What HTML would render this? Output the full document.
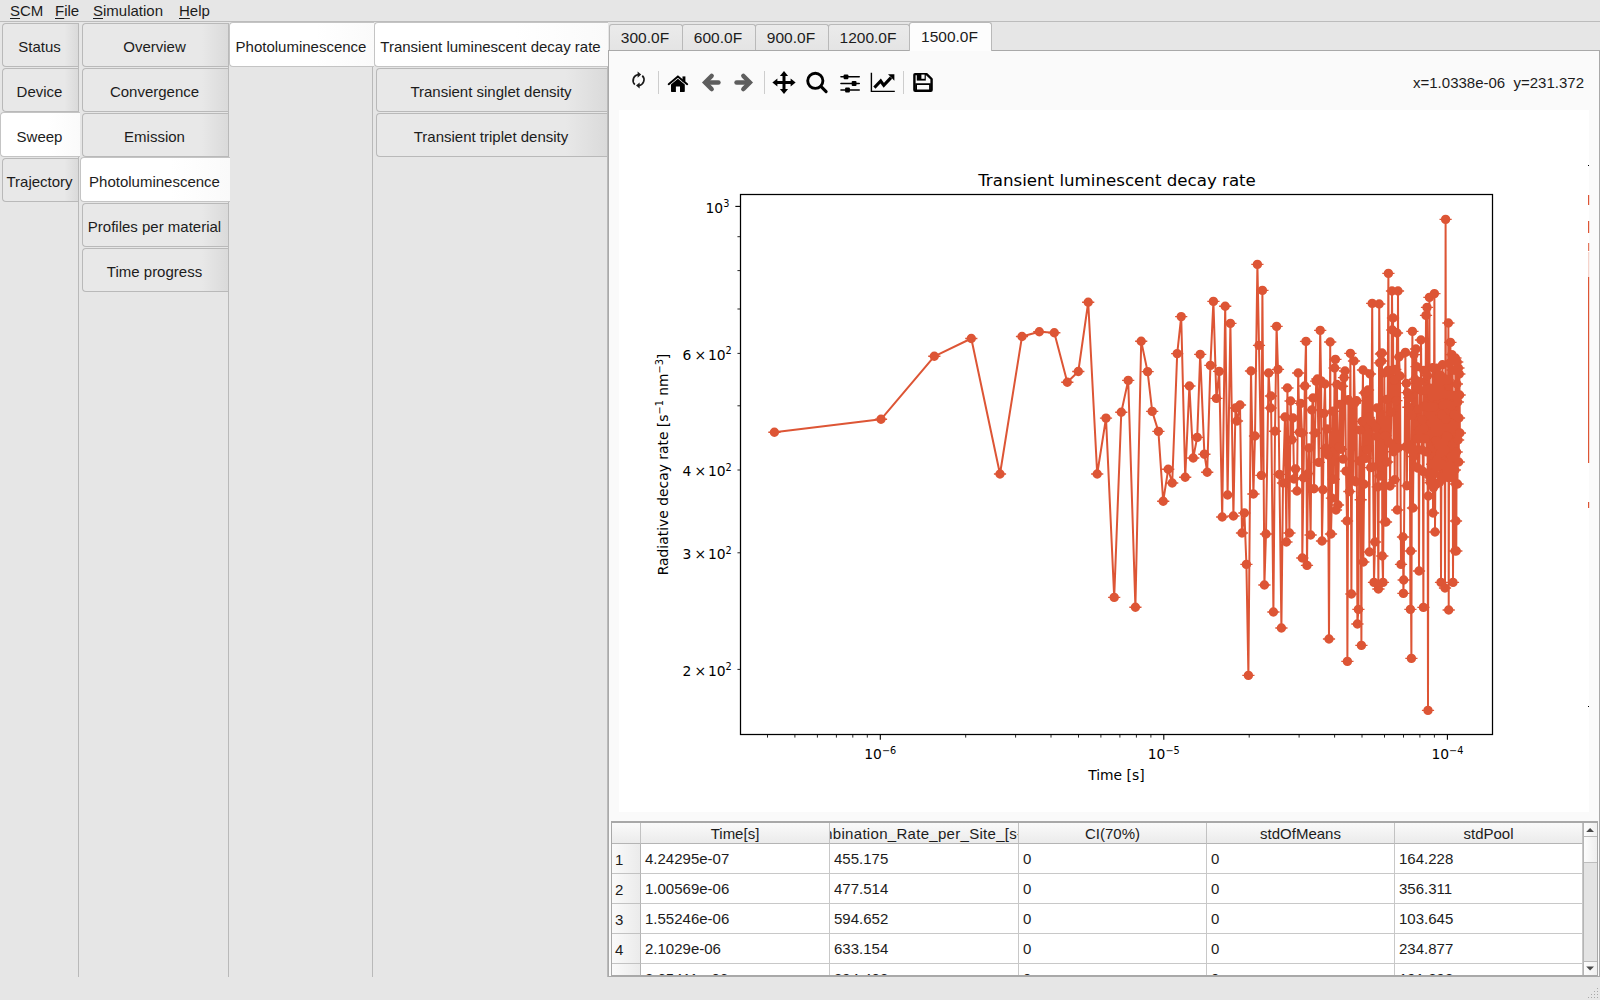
<!DOCTYPE html><html><head><meta charset="utf-8"><title>Sweep - Photoluminescence</title><style>
*{box-sizing:border-box}
html,body{margin:0;padding:0}
body{width:1600px;height:1000px;overflow:hidden;background:#e6e6e6;font-family:"Liberation Sans",sans-serif;font-size:15px;color:#1c1c1c;position:relative}
.abs{position:absolute}
.menubar{left:0;top:0;width:1600px;height:22px;border-bottom:1px solid #bcbcbc}
.menubar span{position:absolute;top:2px;line-height:18px}
.menubar u{text-decoration-thickness:1px;text-underline-offset:2px}
.vline{width:1px;background:#b9b9b9;top:23px;height:954px}
.tab{height:44px;line-height:44px;padding-top:1px;padding-right:2px;text-align:center;border:1px solid #b9b9b9;border-right:none;border-radius:4px 0 0 4px;background:linear-gradient(90deg,#e8e8e8 0%,#e8e8e8 82%,#dadada 100%);white-space:nowrap}
.tab.sel{height:45px;padding-top:2px;background:linear-gradient(90deg,#ffffff 0%,#ffffff 60%,#fafafa 100%);border-color:#c4c4c4;z-index:3;border-right:none}
.htab{top:24px;height:26px;line-height:25px;padding-right:2px;font-size:15.5px;text-align:center;border:1px solid #b9b9b9;border-bottom:none;border-radius:3px 3px 0 0;background:linear-gradient(180deg,#ebebeb,#e4e4e4)}
.htab.sel{top:22px;height:29px;line-height:27px;background:#fdfdfd;z-index:3}
.panel{left:608px;top:50px;width:992px;height:927px;background:#fafafa;border:1px solid #a9a9a9}
.canvas{left:619px;top:110px;width:970px;height:702px;background:#fff}
.sep{width:1px;height:24px;top:70px;background:#d0d0d0}
.coords{right:16px;top:74px;line-height:18px;white-space:pre}
.tbl{left:611px;top:821px;width:987px;height:155px;background:#fff;border:1px solid #a8a8a8;border-top:2px solid #a8a8a8;overflow:hidden}
.hdr{top:0;height:21px;line-height:21px;text-align:center;background:linear-gradient(180deg,#fafafa,#ebebeb);border-right:1px solid #c2c2c2;border-bottom:1px solid #b4b4b4;white-space:nowrap;overflow:hidden}
.rowh{left:0;width:29px;height:30px;line-height:31px;padding-left:3px;background:linear-gradient(90deg,#fafafa,#ebebeb);border-right:1px solid #b4b4b4;border-bottom:1px solid #c2c2c2}
.cell{height:30px;line-height:30px;padding-left:4px;border-right:1px solid #c8c8c8;border-bottom:1px solid #c8c8c8;white-space:nowrap;overflow:hidden}
.sb{left:1583px;top:823px;width:14px;height:152px;background:#e3e3e3;border-left:1px solid #b4b4b4}
.sbb{left:0;width:13px;height:14px;background:linear-gradient(90deg,#fdfdfd,#f0f0f0);border-bottom:1px solid #b9b9b9}
svg text{font-family:"DejaVu Sans",sans-serif}
</style></head><body>
<div class="abs menubar"><span style="left:10px"><u>S</u>CM</span><span style="left:55px"><u>F</u>ile</span><span style="left:93px"><u>S</u>imulation</span><span style="left:179px"><u>H</u>elp</span></div>
<div class="abs vline" style="left:78px"></div>
<div class="abs vline" style="left:228px"></div>
<div class="abs vline" style="left:372px"></div>
<div class="abs vline" style="left:607px"></div>
<div class="abs tab" style="left:2px;top:23px;width:76px">Status</div>
<div class="abs tab" style="left:2px;top:68px;width:76px">Device</div>
<div class="abs tab sel" style="left:0px;top:112px;width:80px">Sweep</div>
<div class="abs tab" style="left:2px;top:158px;width:76px">Trajectory</div>
<div class="abs tab" style="left:82px;top:23px;width:146px">Overview</div>
<div class="abs tab" style="left:82px;top:68px;width:146px">Convergence</div>
<div class="abs tab" style="left:82px;top:113px;width:146px">Emission</div>
<div class="abs tab sel" style="left:80px;top:157px;width:150px">Photoluminescence</div>
<div class="abs tab" style="left:82px;top:203px;width:146px">Profiles per material</div>
<div class="abs tab" style="left:82px;top:248px;width:146px">Time progress</div>
<div class="abs tab sel" style="left:229px;top:22px;width:145px">Photoluminescence</div>
<div class="abs tab sel" style="left:374px;top:22px;width:234px">Transient luminescent decay rate</div>
<div class="abs tab" style="left:376px;top:68px;width:231px">Transient singlet density</div>
<div class="abs tab" style="left:376px;top:113px;width:231px">Transient triplet density</div>
<div class="abs panel"></div>
<div class="abs htab" style="left:609px;width:74px">300.0F</div>
<div class="abs htab" style="left:682px;width:74px">600.0F</div>
<div class="abs htab" style="left:755px;width:74px">900.0F</div>
<div class="abs htab" style="left:828px;width:82px">1200.0F</div>
<div class="abs htab sel" style="left:909px;width:83px">1500.0F</div>
<svg class="abs" style="left:608px;top:60px" width="400" height="44" viewBox="608 60 400 44">
<rect x="658.0" y="71" width="1" height="23" fill="#cdcdcd"/>
<rect x="764.0" y="71" width="1" height="23" fill="#cdcdcd"/>
<rect x="903.0" y="71" width="1" height="23" fill="#cdcdcd"/>
<g fill="none" stroke="#1a1a1a" stroke-width="1.7"><path d="M634.8 84.6A5.9 5.9 0 0 1 638.6 74.6"/><path d="M642.3 75.6A5.9 5.9 0 0 1 638.6 85.6"/></g><path d="M637.6 71.6L641.2 74.6L637.6 77.7Z" fill="#1a1a1a"/><path d="M639.6 82.5L636 85.6L639.6 88.6Z" fill="#1a1a1a"/>
<g fill="#000"><path d="M668.7 84.2L677.9 76.5L687.2 84.2" fill="none" stroke="#000" stroke-width="2" stroke-linecap="round" stroke-linejoin="miter"/><path d="M671 84.4L677.9 78.7L684.8 84.4V91.3Q684.8 92 684.1 92H680V86.4H675.9V92H671.7Q671 92 671 91.3Z"/><rect x="682.5" y="76.4" width="2.9" height="5.2"/></g>
<g fill="none" stroke="#5e5e5e" stroke-width="4.6" stroke-linecap="round" stroke-linejoin="miter"><path d="M711.6 76L705.2 82.5L711.6 89"/><path d="M706 82.5H718.4"/><path d="M743.4 76L749.8 82.5L743.4 89"/><path d="M749 82.5H736.6"/></g>
<g fill="#000"><rect x="782.5" y="74" width="3" height="17"/><rect x="775.5" y="81" width="17" height="3"/><path d="M784 70.9L788.1 75.9H779.9Z"/><path d="M784 94.1L788.1 89.1H779.9Z"/><path d="M772.4 82.5L777.4 78.4V86.6Z"/><path d="M795.6 82.5L790.6 78.4V86.6Z"/></g>
<circle cx="815.3" cy="80.8" r="7.6" fill="none" stroke="#000" stroke-width="2.9"/><path d="M820.9 86.4L826.1 91.6" stroke="#000" stroke-width="3.1" stroke-linecap="round"/>
<g fill="#000"><rect x="840.2" y="76" width="19.8" height="1.6" rx=".8"/><rect x="840.2" y="82.7" width="19.8" height="1.6" rx=".8"/><rect x="840.2" y="89.2" width="19.8" height="1.6" rx=".8"/><rect x="843.6" y="74.4" width="4.8" height="4.8" rx="1"/><rect x="851.7" y="81.1" width="4.8" height="4.8" rx="1"/><rect x="845.1" y="87.6" width="4.8" height="4.8" rx="1"/></g>
<path d="M871.4 72.7V91.4H894.8" fill="none" stroke="#000" stroke-width="1.4"/><path d="M874.4 87.6L880.7 81L883.8 85.4L891 77.6" fill="none" stroke="#000" stroke-width="3.1" stroke-linejoin="miter"/><path d="M888 74.3H894.4V80.8Z" fill="#000"/>
<path d="M915 74.1H926.6L931.6 79V90Q931.6 90.7 930.9 90.7H915.2Q914.4 90.7 914.4 90V74.8Q914.4 74.1 915 74.1Z" fill="#fafafa" stroke="#000" stroke-width="2.4" stroke-linejoin="round"/><rect x="916.8" y="73.5" width="9" height="7.1" fill="#000"/><rect x="921.4" y="74.6" width="3.2" height="4.2" fill="#fafafa"/><path d="M916.1 91V84.2H930V91" fill="none" stroke="#000" stroke-width="1.8"/>
</svg>
<div class="abs coords">x=1.0338e-06  y=231.372</div>
<div class="abs canvas"></div>
<svg class="abs" style="left:0;top:0" width="1600" height="1000" viewBox="0 0 1600 1000">
<defs><clipPath id="axclip"><rect x="740.25" y="194.2" width="751.75" height="540.5999999999999"/></clipPath></defs>
<g clip-path="url(#axclip)" stroke="#dd5535" fill="#dd5535">
<polyline fill="none" stroke-width="2" stroke-linejoin="round" points="774.4,432.3 881,419.3 934.3,356.3 971.3,338.5 1000,474 1022,336.5 1039.3,331.8 1054.3,332.8 1067.3,382.3 1078.3,371.5 1088.2,302.3 1097.2,474 1106,418.1 1114.2,597.4 1121.3,412.2 1128.2,380.4 1135.4,607.2 1141.2,341.2 1147.6,371.6 1152.2,411.4 1158.4,431.4 1163.2,501.2 1168.2,469.3 1172.2,483 1177.2,353.6 1181.2,316.6 1185.2,477.2 1189.4,386 1193.2,458 1197.2,437.4 1200.2,354.4 1204.4,454.2 1207.2,472.2 1210.4,365.4 1213.4,301.4 1216.4,398.4 1219.2,371.4 1222.2,517 1225.2,306.2 1227.6,495 1230.4,323.4 1233.4,516 1235.5,408 1237,421 1240,405 1242,533 1244.4,513 1246.4,564.4 1248.4,675.4 1251,371 1253.4,494 1255,436 1257.4,264.4 1259,345.4 1261.4,475.4 1262.4,290.4 1264.4,585 1266,534 1268.6,373 1270.6,408 1271,396 1273.4,612 1275,431.2 1276.6,326.4 1278,369.4 1279.4,474.4 1281.4,628 1283,483 1285,417 1286.4,542 1287.4,388 1289.4,533 1290.6,401 1291.8,439.8 1293,418 1294,479 1295.5,468.9 1297,491 1298.2,373 1299.5,432.3 1300.7,403.4 1302,433 1302.3,558 1303.5,477.7 1304.8,386 1306,341.4 1307,565.4 1308,473.6 1309,448 1310.6,535 1311.8,410 1313,398 1314,488.8 1315,433 1316.2,381.1 1317.4,379 1318.8,462.4 1320.2,330.4 1321.1,380.9 1322,541 1323,489.7 1324,413.4 1325,384 1326,448.3 1327,429 1328,455 1329,639 1330.2,342 1331,534 1331.9,498.1 1332.8,411.3 1333.7,479.2 1334.6,368 1335.4,359.4 1336,510 1337,384.5 1338,505 1339,446.8 1340,404.5 1341,449.2 1342,386.3 1343,459.1 1344,377.6 1345,371 1346,471.1 1347,521 1347.4,661.4 1348.4,399.8 1349.4,491.5 1350.4,353.4 1351.4,594 1352.3,404 1353.1,480.6 1354,361 1354.8,403 1355.7,481.8 1356.6,400.7 1357.4,624 1358.4,609.4 1359.2,461 1359.9,429.9 1360.7,499.8 1361.4,645.4 1362.2,421.4 1363,370 1363.3,562 1364.1,484.2 1364.9,393 1365.7,458.4 1366.4,391.6 1367.2,449.8 1368,390 1368.7,417.4 1369.4,552 1370,374 1370.7,467.6 1371.5,421.7 1372.2,303.4 1373.1,466.9 1374,582.4 1375,542 1375.7,427.7 1376.4,436.3 1377,408 1377.7,486.9 1378.4,589 1379.2,304 1379.8,362.9 1380.4,476 1381,354 1381.5,361 1382,353 1382.3,556 1383,582.4 1383.7,485.9 1384.3,372.9 1385,522 1385.5,435.6 1386,522 1386.6,399.4 1387.2,462 1387.8,370.5 1388.4,273.4 1388.9,442 1389.5,370.4 1390,486 1390.7,443.6 1391.3,412.3 1392,291 1392.3,330 1393,318 1393.6,451.7 1394.1,380.3 1394.7,479.7 1395.3,369.5 1395.9,448.6 1396.4,400.6 1397,333 1397.3,510 1398,291 1398.5,447.6 1399,357 1400,376 1401,564.4 1403,537 1403.4,593.4 1403.7,580 1405.4,352.4 1405.9,446.7 1406.4,383.4 1406.9,485.7 1407.4,392.6 1407.9,445.9 1408.4,407.3 1408.9,449 1409.4,397.7 1409.9,447.3 1410.4,609.4 1410.7,551 1411.4,658.4 1411.9,415.5 1412.4,331.4 1413,508 1413.5,456.5 1414,354.6 1414.5,449.6 1415,379.2 1415.5,467 1416,349 1416.5,366.6 1417,438.6 1417.5,387.7 1418,468.1 1418.5,409.3 1419,571 1419.5,430.2 1420,381.8 1420.5,438.3 1421,340 1421.5,390.7 1422,450 1422.4,419.8 1422.9,471.4 1423.4,607.4 1423.8,370.5 1424.3,428.5 1424.7,405.8 1425.1,438.7 1425.6,390 1426,315.4 1426.5,451.9 1427,307.4 1427.5,375.7 1428,710.4 1428.3,496 1428.7,473.5 1429,407.5 1429.4,297.4 1429.8,477 1430.2,388.1 1430.6,482.7 1431,390.6 1431.4,480.9 1431.8,396.8 1432.2,464.3 1432.6,367.8 1433,513 1433.5,487.6 1433.9,406.7 1434.4,293.6 1435,532 1435.4,473 1435.8,386.8 1436.2,440.6 1436.6,368.1 1437,459.8 1437.4,395.9 1437.8,466.6 1438.2,383.3 1438.6,445.4 1439,375.8 1439.4,482.4 1439.8,388.3 1440.2,453.5 1440.6,375.3 1441,582.4 1441.4,477.1 1441.7,415 1442.1,464.3 1442.5,364.8 1442.8,479 1443.2,405.4 1443.5,451.4 1443.9,380.4 1444.3,442.4 1444.6,394.4 1445,588 1445.3,450 1445.6,219.4 1445.9,419.3 1446.3,436.2 1446.7,403.6 1447,470.4 1447.3,379.5 1447.7,436.7 1448.1,380.1 1448.4,323 1448.7,610 1449,477.7 1449.4,363.4 1449.7,465.6 1450.1,395.2 1450.4,342.4 1450.8,477.6 1451.1,405.6 1451.5,457.1 1451.9,354.6 1452.3,472 1452.6,370 1453,582.4 1453.4,470.7 1453.7,395.4 1454.1,456 1454.4,414.8 1454.8,470 1455.1,551 1455.4,358 1455.7,484 1456,521 1456.3,551 1456.6,452 1456.9,384 1457.2,362 1457.5,484 1457.8,402 1458.1,440 1458.4,368 1458.7,462 1459,418 1459.3,374 1459.6,395 1459.9,433"/>
<path d="M768.3 432.3h12.2M874.9 419.3h12.2M928.2 356.3h12.2M965.2 338.5h12.2M993.9 474h12.2M1015.9 336.5h12.2M1033.2 331.8h12.2M1048.2 332.8h12.2M1061.2 382.3h12.2M1072.2 371.5h12.2M1082.1 302.3h12.2M1091.1 474h12.2M1099.9 418.1h12.2M1108.1 597.4h12.2M1115.2 412.2h12.2M1122.1 380.4h12.2M1129.3 607.2h12.2M1135.1 341.2h12.2M1141.5 371.6h12.2M1146.1 411.4h12.2M1152.3 431.4h12.2M1157.1 501.2h12.2M1162.1 469.3h12.2M1166.1 483h12.2M1171.1 353.6h12.2M1175.1 316.6h12.2M1179.1 477.2h12.2M1183.3 386h12.2M1187.1 458h12.2M1191.1 437.4h12.2M1194.1 354.4h12.2M1198.3 454.2h12.2M1201.1 472.2h12.2M1204.3 365.4h12.2M1207.3 301.4h12.2M1210.3 398.4h12.2M1213.1 371.4h12.2M1216.1 517h12.2M1219.1 306.2h12.2M1221.5 495h12.2M1224.3 323.4h12.2M1227.3 516h12.2M1229.4 408h12.2M1230.9 421h12.2M1233.9 405h12.2M1235.9 533h12.2M1238.3 513h12.2M1240.3 564.4h12.2M1242.3 675.4h12.2M1244.9 371h12.2M1247.3 494h12.2M1248.9 436h12.2M1251.3 264.4h12.2M1252.9 345.4h12.2M1255.3 475.4h12.2M1256.3 290.4h12.2M1258.3 585h12.2M1259.9 534h12.2M1262.5 373h12.2M1264.5 408h12.2M1264.9 396h12.2M1267.3 612h12.2M1268.9 431.2h12.2M1270.5 326.4h12.2M1271.9 369.4h12.2M1273.3 474.4h12.2M1275.3 628h12.2M1276.9 483h12.2M1278.9 417h12.2M1280.3 542h12.2M1281.3 388h12.2M1283.3 533h12.2M1284.5 401h12.2M1285.7 439.8h12.2M1286.9 418h12.2M1287.9 479h12.2M1289.4 468.9h12.2M1290.9 491h12.2M1292.1 373h12.2M1293.4 432.3h12.2M1294.6 403.4h12.2M1295.9 433h12.2M1296.2 558h12.2M1297.4 477.7h12.2M1298.7 386h12.2M1299.9 341.4h12.2M1300.9 565.4h12.2M1301.9 473.6h12.2M1302.9 448h12.2M1304.5 535h12.2M1305.7 410h12.2M1306.9 398h12.2M1307.9 488.8h12.2M1308.9 433h12.2M1310.1 381.1h12.2M1311.3 379h12.2M1312.7 462.4h12.2M1314.1 330.4h12.2M1315 380.9h12.2M1315.9 541h12.2M1316.9 489.7h12.2M1317.9 413.4h12.2M1318.9 384h12.2M1319.9 448.3h12.2M1320.9 429h12.2M1321.9 455h12.2M1322.9 639h12.2M1324.1 342h12.2M1324.9 534h12.2M1325.8 498.1h12.2M1326.7 411.3h12.2M1327.6 479.2h12.2M1328.5 368h12.2M1329.3 359.4h12.2M1329.9 510h12.2M1330.9 384.5h12.2M1331.9 505h12.2M1332.9 446.8h12.2M1333.9 404.5h12.2M1334.9 449.2h12.2M1335.9 386.3h12.2M1336.9 459.1h12.2M1337.9 377.6h12.2M1338.9 371h12.2M1339.9 471.1h12.2M1340.9 521h12.2M1341.3 661.4h12.2M1342.3 399.8h12.2M1343.3 491.5h12.2M1344.3 353.4h12.2M1345.3 594h12.2M1346.2 404h12.2M1347 480.6h12.2M1347.9 361h12.2M1348.8 403h12.2M1349.6 481.8h12.2M1350.5 400.7h12.2M1351.3 624h12.2M1352.3 609.4h12.2M1353.1 461h12.2M1353.8 429.9h12.2M1354.6 499.8h12.2M1355.3 645.4h12.2M1356.1 421.4h12.2M1356.9 370h12.2M1357.2 562h12.2M1358 484.2h12.2M1358.8 393h12.2M1359.6 458.4h12.2M1360.3 391.6h12.2M1361.1 449.8h12.2M1361.9 390h12.2M1362.6 417.4h12.2M1363.3 552h12.2M1363.9 374h12.2M1364.6 467.6h12.2M1365.4 421.7h12.2M1366.1 303.4h12.2M1367 466.9h12.2M1367.9 582.4h12.2M1368.9 542h12.2M1369.6 427.7h12.2M1370.3 436.3h12.2M1370.9 408h12.2M1371.6 486.9h12.2M1372.3 589h12.2M1373.1 304h12.2M1373.7 362.9h12.2M1374.3 476h12.2M1374.9 354h12.2M1375.4 361h12.2M1375.9 353h12.2M1376.2 556h12.2M1376.9 582.4h12.2M1377.6 485.9h12.2M1378.2 372.9h12.2M1378.9 522h12.2M1379.4 435.6h12.2M1379.9 522h12.2M1380.5 399.4h12.2M1381.1 462h12.2M1381.7 370.5h12.2M1382.3 273.4h12.2M1382.8 442h12.2M1383.4 370.4h12.2M1383.9 486h12.2M1384.6 443.6h12.2M1385.2 412.3h12.2M1385.9 291h12.2M1386.2 330h12.2M1386.9 318h12.2M1387.5 451.7h12.2M1388 380.3h12.2M1388.6 479.7h12.2M1389.2 369.5h12.2M1389.8 448.6h12.2M1390.3 400.6h12.2M1390.9 333h12.2M1391.2 510h12.2M1391.9 291h12.2M1392.4 447.6h12.2M1392.9 357h12.2M1393.9 376h12.2M1394.9 564.4h12.2M1396.9 537h12.2M1397.3 593.4h12.2M1397.6 580h12.2M1399.3 352.4h12.2M1399.8 446.7h12.2M1400.3 383.4h12.2M1400.8 485.7h12.2M1401.3 392.6h12.2M1401.8 445.9h12.2M1402.3 407.3h12.2M1402.8 449h12.2M1403.3 397.7h12.2M1403.8 447.3h12.2M1404.3 609.4h12.2M1404.6 551h12.2M1405.3 658.4h12.2M1405.8 415.5h12.2M1406.3 331.4h12.2M1406.9 508h12.2M1407.4 456.5h12.2M1407.9 354.6h12.2M1408.4 449.6h12.2M1408.9 379.2h12.2M1409.4 467h12.2M1409.9 349h12.2M1410.4 366.6h12.2M1410.9 438.6h12.2M1411.4 387.7h12.2M1411.9 468.1h12.2M1412.4 409.3h12.2M1412.9 571h12.2M1413.4 430.2h12.2M1413.9 381.8h12.2M1414.4 438.3h12.2M1414.9 340h12.2M1415.4 390.7h12.2M1415.9 450h12.2M1416.3 419.8h12.2M1416.8 471.4h12.2M1417.3 607.4h12.2M1417.7 370.5h12.2M1418.2 428.5h12.2M1418.6 405.8h12.2M1419 438.7h12.2M1419.5 390h12.2M1419.9 315.4h12.2M1420.4 451.9h12.2M1420.9 307.4h12.2M1421.4 375.7h12.2M1421.9 710.4h12.2M1422.2 496h12.2M1422.6 473.5h12.2M1422.9 407.5h12.2M1423.3 297.4h12.2M1423.7 477h12.2M1424.1 388.1h12.2M1424.5 482.7h12.2M1424.9 390.6h12.2M1425.3 480.9h12.2M1425.7 396.8h12.2M1426.1 464.3h12.2M1426.5 367.8h12.2M1426.9 513h12.2M1427.4 487.6h12.2M1427.8 406.7h12.2M1428.3 293.6h12.2M1428.9 532h12.2M1429.3 473h12.2M1429.7 386.8h12.2M1430.1 440.6h12.2M1430.5 368.1h12.2M1430.9 459.8h12.2M1431.3 395.9h12.2M1431.7 466.6h12.2M1432.1 383.3h12.2M1432.5 445.4h12.2M1432.9 375.8h12.2M1433.3 482.4h12.2M1433.7 388.3h12.2M1434.1 453.5h12.2M1434.5 375.3h12.2M1434.9 582.4h12.2M1435.3 477.1h12.2M1435.6 415h12.2M1436 464.3h12.2M1436.4 364.8h12.2M1436.7 479h12.2M1437.1 405.4h12.2M1437.4 451.4h12.2M1437.8 380.4h12.2M1438.2 442.4h12.2M1438.5 394.4h12.2M1438.9 588h12.2M1439.2 450h12.2M1439.5 219.4h12.2M1439.8 419.3h12.2M1440.2 436.2h12.2M1440.6 403.6h12.2M1440.9 470.4h12.2M1441.2 379.5h12.2M1441.6 436.7h12.2M1442 380.1h12.2M1442.3 323h12.2M1442.6 610h12.2M1442.9 477.7h12.2M1443.3 363.4h12.2M1443.6 465.6h12.2M1444 395.2h12.2M1444.3 342.4h12.2M1444.7 477.6h12.2M1445 405.6h12.2M1445.4 457.1h12.2M1445.8 354.6h12.2M1446.2 472h12.2M1446.5 370h12.2M1446.9 582.4h12.2M1447.3 470.7h12.2M1447.6 395.4h12.2M1448 456h12.2M1448.3 414.8h12.2M1448.7 470h12.2M1449 551h12.2M1449.3 358h12.2M1449.6 484h12.2M1449.9 521h12.2M1450.2 551h12.2M1450.5 452h12.2M1450.8 384h12.2M1451.1 362h12.2M1451.4 484h12.2M1451.7 402h12.2M1452 440h12.2M1452.3 368h12.2M1452.6 462h12.2M1452.9 418h12.2M1453.2 374h12.2M1453.5 395h12.2M1453.8 433h12.2" stroke-width="1.4" fill="none"/>
<path d="M769.7 432.3a4.7 4.7 0 1 0 9.4 0a4.7 4.7 0 1 0 -9.4 0zM876.3 419.3a4.7 4.7 0 1 0 9.4 0a4.7 4.7 0 1 0 -9.4 0zM929.6 356.3a4.7 4.7 0 1 0 9.4 0a4.7 4.7 0 1 0 -9.4 0zM966.6 338.5a4.7 4.7 0 1 0 9.4 0a4.7 4.7 0 1 0 -9.4 0zM995.3 474a4.7 4.7 0 1 0 9.4 0a4.7 4.7 0 1 0 -9.4 0zM1017.3 336.5a4.7 4.7 0 1 0 9.4 0a4.7 4.7 0 1 0 -9.4 0zM1034.6 331.8a4.7 4.7 0 1 0 9.4 0a4.7 4.7 0 1 0 -9.4 0zM1049.6 332.8a4.7 4.7 0 1 0 9.4 0a4.7 4.7 0 1 0 -9.4 0zM1062.6 382.3a4.7 4.7 0 1 0 9.4 0a4.7 4.7 0 1 0 -9.4 0zM1073.6 371.5a4.7 4.7 0 1 0 9.4 0a4.7 4.7 0 1 0 -9.4 0zM1083.5 302.3a4.7 4.7 0 1 0 9.4 0a4.7 4.7 0 1 0 -9.4 0zM1092.5 474a4.7 4.7 0 1 0 9.4 0a4.7 4.7 0 1 0 -9.4 0zM1101.3 418.1a4.7 4.7 0 1 0 9.4 0a4.7 4.7 0 1 0 -9.4 0zM1109.5 597.4a4.7 4.7 0 1 0 9.4 0a4.7 4.7 0 1 0 -9.4 0zM1116.6 412.2a4.7 4.7 0 1 0 9.4 0a4.7 4.7 0 1 0 -9.4 0zM1123.5 380.4a4.7 4.7 0 1 0 9.4 0a4.7 4.7 0 1 0 -9.4 0zM1130.7 607.2a4.7 4.7 0 1 0 9.4 0a4.7 4.7 0 1 0 -9.4 0zM1136.5 341.2a4.7 4.7 0 1 0 9.4 0a4.7 4.7 0 1 0 -9.4 0zM1142.9 371.6a4.7 4.7 0 1 0 9.4 0a4.7 4.7 0 1 0 -9.4 0zM1147.5 411.4a4.7 4.7 0 1 0 9.4 0a4.7 4.7 0 1 0 -9.4 0zM1153.7 431.4a4.7 4.7 0 1 0 9.4 0a4.7 4.7 0 1 0 -9.4 0zM1158.5 501.2a4.7 4.7 0 1 0 9.4 0a4.7 4.7 0 1 0 -9.4 0zM1163.5 469.3a4.7 4.7 0 1 0 9.4 0a4.7 4.7 0 1 0 -9.4 0zM1167.5 483a4.7 4.7 0 1 0 9.4 0a4.7 4.7 0 1 0 -9.4 0zM1172.5 353.6a4.7 4.7 0 1 0 9.4 0a4.7 4.7 0 1 0 -9.4 0zM1176.5 316.6a4.7 4.7 0 1 0 9.4 0a4.7 4.7 0 1 0 -9.4 0zM1180.5 477.2a4.7 4.7 0 1 0 9.4 0a4.7 4.7 0 1 0 -9.4 0zM1184.7 386a4.7 4.7 0 1 0 9.4 0a4.7 4.7 0 1 0 -9.4 0zM1188.5 458a4.7 4.7 0 1 0 9.4 0a4.7 4.7 0 1 0 -9.4 0zM1192.5 437.4a4.7 4.7 0 1 0 9.4 0a4.7 4.7 0 1 0 -9.4 0zM1195.5 354.4a4.7 4.7 0 1 0 9.4 0a4.7 4.7 0 1 0 -9.4 0zM1199.7 454.2a4.7 4.7 0 1 0 9.4 0a4.7 4.7 0 1 0 -9.4 0zM1202.5 472.2a4.7 4.7 0 1 0 9.4 0a4.7 4.7 0 1 0 -9.4 0zM1205.7 365.4a4.7 4.7 0 1 0 9.4 0a4.7 4.7 0 1 0 -9.4 0zM1208.7 301.4a4.7 4.7 0 1 0 9.4 0a4.7 4.7 0 1 0 -9.4 0zM1211.7 398.4a4.7 4.7 0 1 0 9.4 0a4.7 4.7 0 1 0 -9.4 0zM1214.5 371.4a4.7 4.7 0 1 0 9.4 0a4.7 4.7 0 1 0 -9.4 0zM1217.5 517a4.7 4.7 0 1 0 9.4 0a4.7 4.7 0 1 0 -9.4 0zM1220.5 306.2a4.7 4.7 0 1 0 9.4 0a4.7 4.7 0 1 0 -9.4 0zM1222.9 495a4.7 4.7 0 1 0 9.4 0a4.7 4.7 0 1 0 -9.4 0zM1225.7 323.4a4.7 4.7 0 1 0 9.4 0a4.7 4.7 0 1 0 -9.4 0zM1228.7 516a4.7 4.7 0 1 0 9.4 0a4.7 4.7 0 1 0 -9.4 0zM1230.8 408a4.7 4.7 0 1 0 9.4 0a4.7 4.7 0 1 0 -9.4 0zM1232.3 421a4.7 4.7 0 1 0 9.4 0a4.7 4.7 0 1 0 -9.4 0zM1235.3 405a4.7 4.7 0 1 0 9.4 0a4.7 4.7 0 1 0 -9.4 0zM1237.3 533a4.7 4.7 0 1 0 9.4 0a4.7 4.7 0 1 0 -9.4 0zM1239.7 513a4.7 4.7 0 1 0 9.4 0a4.7 4.7 0 1 0 -9.4 0zM1241.7 564.4a4.7 4.7 0 1 0 9.4 0a4.7 4.7 0 1 0 -9.4 0zM1243.7 675.4a4.7 4.7 0 1 0 9.4 0a4.7 4.7 0 1 0 -9.4 0zM1246.3 371a4.7 4.7 0 1 0 9.4 0a4.7 4.7 0 1 0 -9.4 0zM1248.7 494a4.7 4.7 0 1 0 9.4 0a4.7 4.7 0 1 0 -9.4 0zM1250.3 436a4.7 4.7 0 1 0 9.4 0a4.7 4.7 0 1 0 -9.4 0zM1252.7 264.4a4.7 4.7 0 1 0 9.4 0a4.7 4.7 0 1 0 -9.4 0zM1254.3 345.4a4.7 4.7 0 1 0 9.4 0a4.7 4.7 0 1 0 -9.4 0zM1256.7 475.4a4.7 4.7 0 1 0 9.4 0a4.7 4.7 0 1 0 -9.4 0zM1257.7 290.4a4.7 4.7 0 1 0 9.4 0a4.7 4.7 0 1 0 -9.4 0zM1259.7 585a4.7 4.7 0 1 0 9.4 0a4.7 4.7 0 1 0 -9.4 0zM1261.3 534a4.7 4.7 0 1 0 9.4 0a4.7 4.7 0 1 0 -9.4 0zM1263.9 373a4.7 4.7 0 1 0 9.4 0a4.7 4.7 0 1 0 -9.4 0zM1265.9 408a4.7 4.7 0 1 0 9.4 0a4.7 4.7 0 1 0 -9.4 0zM1266.3 396a4.7 4.7 0 1 0 9.4 0a4.7 4.7 0 1 0 -9.4 0zM1268.7 612a4.7 4.7 0 1 0 9.4 0a4.7 4.7 0 1 0 -9.4 0zM1270.3 431.2a4.7 4.7 0 1 0 9.4 0a4.7 4.7 0 1 0 -9.4 0zM1271.9 326.4a4.7 4.7 0 1 0 9.4 0a4.7 4.7 0 1 0 -9.4 0zM1273.3 369.4a4.7 4.7 0 1 0 9.4 0a4.7 4.7 0 1 0 -9.4 0zM1274.7 474.4a4.7 4.7 0 1 0 9.4 0a4.7 4.7 0 1 0 -9.4 0zM1276.7 628a4.7 4.7 0 1 0 9.4 0a4.7 4.7 0 1 0 -9.4 0zM1278.3 483a4.7 4.7 0 1 0 9.4 0a4.7 4.7 0 1 0 -9.4 0zM1280.3 417a4.7 4.7 0 1 0 9.4 0a4.7 4.7 0 1 0 -9.4 0zM1281.7 542a4.7 4.7 0 1 0 9.4 0a4.7 4.7 0 1 0 -9.4 0zM1282.7 388a4.7 4.7 0 1 0 9.4 0a4.7 4.7 0 1 0 -9.4 0zM1284.7 533a4.7 4.7 0 1 0 9.4 0a4.7 4.7 0 1 0 -9.4 0zM1285.9 401a4.7 4.7 0 1 0 9.4 0a4.7 4.7 0 1 0 -9.4 0zM1287.1 439.8a4.7 4.7 0 1 0 9.4 0a4.7 4.7 0 1 0 -9.4 0zM1288.3 418a4.7 4.7 0 1 0 9.4 0a4.7 4.7 0 1 0 -9.4 0zM1289.3 479a4.7 4.7 0 1 0 9.4 0a4.7 4.7 0 1 0 -9.4 0zM1290.8 468.9a4.7 4.7 0 1 0 9.4 0a4.7 4.7 0 1 0 -9.4 0zM1292.3 491a4.7 4.7 0 1 0 9.4 0a4.7 4.7 0 1 0 -9.4 0zM1293.5 373a4.7 4.7 0 1 0 9.4 0a4.7 4.7 0 1 0 -9.4 0zM1294.8 432.3a4.7 4.7 0 1 0 9.4 0a4.7 4.7 0 1 0 -9.4 0zM1296 403.4a4.7 4.7 0 1 0 9.4 0a4.7 4.7 0 1 0 -9.4 0zM1297.3 433a4.7 4.7 0 1 0 9.4 0a4.7 4.7 0 1 0 -9.4 0zM1297.6 558a4.7 4.7 0 1 0 9.4 0a4.7 4.7 0 1 0 -9.4 0zM1298.8 477.7a4.7 4.7 0 1 0 9.4 0a4.7 4.7 0 1 0 -9.4 0zM1300.1 386a4.7 4.7 0 1 0 9.4 0a4.7 4.7 0 1 0 -9.4 0zM1301.3 341.4a4.7 4.7 0 1 0 9.4 0a4.7 4.7 0 1 0 -9.4 0zM1302.3 565.4a4.7 4.7 0 1 0 9.4 0a4.7 4.7 0 1 0 -9.4 0zM1303.3 473.6a4.7 4.7 0 1 0 9.4 0a4.7 4.7 0 1 0 -9.4 0zM1304.3 448a4.7 4.7 0 1 0 9.4 0a4.7 4.7 0 1 0 -9.4 0zM1305.9 535a4.7 4.7 0 1 0 9.4 0a4.7 4.7 0 1 0 -9.4 0zM1307.1 410a4.7 4.7 0 1 0 9.4 0a4.7 4.7 0 1 0 -9.4 0zM1308.3 398a4.7 4.7 0 1 0 9.4 0a4.7 4.7 0 1 0 -9.4 0zM1309.3 488.8a4.7 4.7 0 1 0 9.4 0a4.7 4.7 0 1 0 -9.4 0zM1310.3 433a4.7 4.7 0 1 0 9.4 0a4.7 4.7 0 1 0 -9.4 0zM1311.5 381.1a4.7 4.7 0 1 0 9.4 0a4.7 4.7 0 1 0 -9.4 0zM1312.7 379a4.7 4.7 0 1 0 9.4 0a4.7 4.7 0 1 0 -9.4 0zM1314.1 462.4a4.7 4.7 0 1 0 9.4 0a4.7 4.7 0 1 0 -9.4 0zM1315.5 330.4a4.7 4.7 0 1 0 9.4 0a4.7 4.7 0 1 0 -9.4 0zM1316.4 380.9a4.7 4.7 0 1 0 9.4 0a4.7 4.7 0 1 0 -9.4 0zM1317.3 541a4.7 4.7 0 1 0 9.4 0a4.7 4.7 0 1 0 -9.4 0zM1318.3 489.7a4.7 4.7 0 1 0 9.4 0a4.7 4.7 0 1 0 -9.4 0zM1319.3 413.4a4.7 4.7 0 1 0 9.4 0a4.7 4.7 0 1 0 -9.4 0zM1320.3 384a4.7 4.7 0 1 0 9.4 0a4.7 4.7 0 1 0 -9.4 0zM1321.3 448.3a4.7 4.7 0 1 0 9.4 0a4.7 4.7 0 1 0 -9.4 0zM1322.3 429a4.7 4.7 0 1 0 9.4 0a4.7 4.7 0 1 0 -9.4 0zM1323.3 455a4.7 4.7 0 1 0 9.4 0a4.7 4.7 0 1 0 -9.4 0zM1324.3 639a4.7 4.7 0 1 0 9.4 0a4.7 4.7 0 1 0 -9.4 0zM1325.5 342a4.7 4.7 0 1 0 9.4 0a4.7 4.7 0 1 0 -9.4 0zM1326.3 534a4.7 4.7 0 1 0 9.4 0a4.7 4.7 0 1 0 -9.4 0zM1327.2 498.1a4.7 4.7 0 1 0 9.4 0a4.7 4.7 0 1 0 -9.4 0zM1328.1 411.3a4.7 4.7 0 1 0 9.4 0a4.7 4.7 0 1 0 -9.4 0zM1329 479.2a4.7 4.7 0 1 0 9.4 0a4.7 4.7 0 1 0 -9.4 0zM1329.9 368a4.7 4.7 0 1 0 9.4 0a4.7 4.7 0 1 0 -9.4 0zM1330.7 359.4a4.7 4.7 0 1 0 9.4 0a4.7 4.7 0 1 0 -9.4 0zM1331.3 510a4.7 4.7 0 1 0 9.4 0a4.7 4.7 0 1 0 -9.4 0zM1332.3 384.5a4.7 4.7 0 1 0 9.4 0a4.7 4.7 0 1 0 -9.4 0zM1333.3 505a4.7 4.7 0 1 0 9.4 0a4.7 4.7 0 1 0 -9.4 0zM1334.3 446.8a4.7 4.7 0 1 0 9.4 0a4.7 4.7 0 1 0 -9.4 0zM1335.3 404.5a4.7 4.7 0 1 0 9.4 0a4.7 4.7 0 1 0 -9.4 0zM1336.3 449.2a4.7 4.7 0 1 0 9.4 0a4.7 4.7 0 1 0 -9.4 0zM1337.3 386.3a4.7 4.7 0 1 0 9.4 0a4.7 4.7 0 1 0 -9.4 0zM1338.3 459.1a4.7 4.7 0 1 0 9.4 0a4.7 4.7 0 1 0 -9.4 0zM1339.3 377.6a4.7 4.7 0 1 0 9.4 0a4.7 4.7 0 1 0 -9.4 0zM1340.3 371a4.7 4.7 0 1 0 9.4 0a4.7 4.7 0 1 0 -9.4 0zM1341.3 471.1a4.7 4.7 0 1 0 9.4 0a4.7 4.7 0 1 0 -9.4 0zM1342.3 521a4.7 4.7 0 1 0 9.4 0a4.7 4.7 0 1 0 -9.4 0zM1342.7 661.4a4.7 4.7 0 1 0 9.4 0a4.7 4.7 0 1 0 -9.4 0zM1343.7 399.8a4.7 4.7 0 1 0 9.4 0a4.7 4.7 0 1 0 -9.4 0zM1344.7 491.5a4.7 4.7 0 1 0 9.4 0a4.7 4.7 0 1 0 -9.4 0zM1345.7 353.4a4.7 4.7 0 1 0 9.4 0a4.7 4.7 0 1 0 -9.4 0zM1346.7 594a4.7 4.7 0 1 0 9.4 0a4.7 4.7 0 1 0 -9.4 0zM1347.6 404a4.7 4.7 0 1 0 9.4 0a4.7 4.7 0 1 0 -9.4 0zM1348.4 480.6a4.7 4.7 0 1 0 9.4 0a4.7 4.7 0 1 0 -9.4 0zM1349.3 361a4.7 4.7 0 1 0 9.4 0a4.7 4.7 0 1 0 -9.4 0zM1350.1 403a4.7 4.7 0 1 0 9.4 0a4.7 4.7 0 1 0 -9.4 0zM1351 481.8a4.7 4.7 0 1 0 9.4 0a4.7 4.7 0 1 0 -9.4 0zM1351.9 400.7a4.7 4.7 0 1 0 9.4 0a4.7 4.7 0 1 0 -9.4 0zM1352.7 624a4.7 4.7 0 1 0 9.4 0a4.7 4.7 0 1 0 -9.4 0zM1353.7 609.4a4.7 4.7 0 1 0 9.4 0a4.7 4.7 0 1 0 -9.4 0zM1354.5 461a4.7 4.7 0 1 0 9.4 0a4.7 4.7 0 1 0 -9.4 0zM1355.2 429.9a4.7 4.7 0 1 0 9.4 0a4.7 4.7 0 1 0 -9.4 0zM1356 499.8a4.7 4.7 0 1 0 9.4 0a4.7 4.7 0 1 0 -9.4 0zM1356.7 645.4a4.7 4.7 0 1 0 9.4 0a4.7 4.7 0 1 0 -9.4 0zM1357.5 421.4a4.7 4.7 0 1 0 9.4 0a4.7 4.7 0 1 0 -9.4 0zM1358.3 370a4.7 4.7 0 1 0 9.4 0a4.7 4.7 0 1 0 -9.4 0zM1358.6 562a4.7 4.7 0 1 0 9.4 0a4.7 4.7 0 1 0 -9.4 0zM1359.4 484.2a4.7 4.7 0 1 0 9.4 0a4.7 4.7 0 1 0 -9.4 0zM1360.2 393a4.7 4.7 0 1 0 9.4 0a4.7 4.7 0 1 0 -9.4 0zM1361 458.4a4.7 4.7 0 1 0 9.4 0a4.7 4.7 0 1 0 -9.4 0zM1361.7 391.6a4.7 4.7 0 1 0 9.4 0a4.7 4.7 0 1 0 -9.4 0zM1362.5 449.8a4.7 4.7 0 1 0 9.4 0a4.7 4.7 0 1 0 -9.4 0zM1363.3 390a4.7 4.7 0 1 0 9.4 0a4.7 4.7 0 1 0 -9.4 0zM1364 417.4a4.7 4.7 0 1 0 9.4 0a4.7 4.7 0 1 0 -9.4 0zM1364.7 552a4.7 4.7 0 1 0 9.4 0a4.7 4.7 0 1 0 -9.4 0zM1365.3 374a4.7 4.7 0 1 0 9.4 0a4.7 4.7 0 1 0 -9.4 0zM1366 467.6a4.7 4.7 0 1 0 9.4 0a4.7 4.7 0 1 0 -9.4 0zM1366.8 421.7a4.7 4.7 0 1 0 9.4 0a4.7 4.7 0 1 0 -9.4 0zM1367.5 303.4a4.7 4.7 0 1 0 9.4 0a4.7 4.7 0 1 0 -9.4 0zM1368.4 466.9a4.7 4.7 0 1 0 9.4 0a4.7 4.7 0 1 0 -9.4 0zM1369.3 582.4a4.7 4.7 0 1 0 9.4 0a4.7 4.7 0 1 0 -9.4 0zM1370.3 542a4.7 4.7 0 1 0 9.4 0a4.7 4.7 0 1 0 -9.4 0zM1371 427.7a4.7 4.7 0 1 0 9.4 0a4.7 4.7 0 1 0 -9.4 0zM1371.7 436.3a4.7 4.7 0 1 0 9.4 0a4.7 4.7 0 1 0 -9.4 0zM1372.3 408a4.7 4.7 0 1 0 9.4 0a4.7 4.7 0 1 0 -9.4 0zM1373 486.9a4.7 4.7 0 1 0 9.4 0a4.7 4.7 0 1 0 -9.4 0zM1373.7 589a4.7 4.7 0 1 0 9.4 0a4.7 4.7 0 1 0 -9.4 0zM1374.5 304a4.7 4.7 0 1 0 9.4 0a4.7 4.7 0 1 0 -9.4 0zM1375.1 362.9a4.7 4.7 0 1 0 9.4 0a4.7 4.7 0 1 0 -9.4 0zM1375.7 476a4.7 4.7 0 1 0 9.4 0a4.7 4.7 0 1 0 -9.4 0zM1376.3 354a4.7 4.7 0 1 0 9.4 0a4.7 4.7 0 1 0 -9.4 0zM1376.8 361a4.7 4.7 0 1 0 9.4 0a4.7 4.7 0 1 0 -9.4 0zM1377.3 353a4.7 4.7 0 1 0 9.4 0a4.7 4.7 0 1 0 -9.4 0zM1377.6 556a4.7 4.7 0 1 0 9.4 0a4.7 4.7 0 1 0 -9.4 0zM1378.3 582.4a4.7 4.7 0 1 0 9.4 0a4.7 4.7 0 1 0 -9.4 0zM1379 485.9a4.7 4.7 0 1 0 9.4 0a4.7 4.7 0 1 0 -9.4 0zM1379.6 372.9a4.7 4.7 0 1 0 9.4 0a4.7 4.7 0 1 0 -9.4 0zM1380.3 522a4.7 4.7 0 1 0 9.4 0a4.7 4.7 0 1 0 -9.4 0zM1380.8 435.6a4.7 4.7 0 1 0 9.4 0a4.7 4.7 0 1 0 -9.4 0zM1381.3 522a4.7 4.7 0 1 0 9.4 0a4.7 4.7 0 1 0 -9.4 0zM1381.9 399.4a4.7 4.7 0 1 0 9.4 0a4.7 4.7 0 1 0 -9.4 0zM1382.5 462a4.7 4.7 0 1 0 9.4 0a4.7 4.7 0 1 0 -9.4 0zM1383.1 370.5a4.7 4.7 0 1 0 9.4 0a4.7 4.7 0 1 0 -9.4 0zM1383.7 273.4a4.7 4.7 0 1 0 9.4 0a4.7 4.7 0 1 0 -9.4 0zM1384.2 442a4.7 4.7 0 1 0 9.4 0a4.7 4.7 0 1 0 -9.4 0zM1384.8 370.4a4.7 4.7 0 1 0 9.4 0a4.7 4.7 0 1 0 -9.4 0zM1385.3 486a4.7 4.7 0 1 0 9.4 0a4.7 4.7 0 1 0 -9.4 0zM1386 443.6a4.7 4.7 0 1 0 9.4 0a4.7 4.7 0 1 0 -9.4 0zM1386.6 412.3a4.7 4.7 0 1 0 9.4 0a4.7 4.7 0 1 0 -9.4 0zM1387.3 291a4.7 4.7 0 1 0 9.4 0a4.7 4.7 0 1 0 -9.4 0zM1387.6 330a4.7 4.7 0 1 0 9.4 0a4.7 4.7 0 1 0 -9.4 0zM1388.3 318a4.7 4.7 0 1 0 9.4 0a4.7 4.7 0 1 0 -9.4 0zM1388.9 451.7a4.7 4.7 0 1 0 9.4 0a4.7 4.7 0 1 0 -9.4 0zM1389.4 380.3a4.7 4.7 0 1 0 9.4 0a4.7 4.7 0 1 0 -9.4 0zM1390 479.7a4.7 4.7 0 1 0 9.4 0a4.7 4.7 0 1 0 -9.4 0zM1390.6 369.5a4.7 4.7 0 1 0 9.4 0a4.7 4.7 0 1 0 -9.4 0zM1391.2 448.6a4.7 4.7 0 1 0 9.4 0a4.7 4.7 0 1 0 -9.4 0zM1391.7 400.6a4.7 4.7 0 1 0 9.4 0a4.7 4.7 0 1 0 -9.4 0zM1392.3 333a4.7 4.7 0 1 0 9.4 0a4.7 4.7 0 1 0 -9.4 0zM1392.6 510a4.7 4.7 0 1 0 9.4 0a4.7 4.7 0 1 0 -9.4 0zM1393.3 291a4.7 4.7 0 1 0 9.4 0a4.7 4.7 0 1 0 -9.4 0zM1393.8 447.6a4.7 4.7 0 1 0 9.4 0a4.7 4.7 0 1 0 -9.4 0zM1394.3 357a4.7 4.7 0 1 0 9.4 0a4.7 4.7 0 1 0 -9.4 0zM1395.3 376a4.7 4.7 0 1 0 9.4 0a4.7 4.7 0 1 0 -9.4 0zM1396.3 564.4a4.7 4.7 0 1 0 9.4 0a4.7 4.7 0 1 0 -9.4 0zM1398.3 537a4.7 4.7 0 1 0 9.4 0a4.7 4.7 0 1 0 -9.4 0zM1398.7 593.4a4.7 4.7 0 1 0 9.4 0a4.7 4.7 0 1 0 -9.4 0zM1399 580a4.7 4.7 0 1 0 9.4 0a4.7 4.7 0 1 0 -9.4 0zM1400.7 352.4a4.7 4.7 0 1 0 9.4 0a4.7 4.7 0 1 0 -9.4 0zM1401.2 446.7a4.7 4.7 0 1 0 9.4 0a4.7 4.7 0 1 0 -9.4 0zM1401.7 383.4a4.7 4.7 0 1 0 9.4 0a4.7 4.7 0 1 0 -9.4 0zM1402.2 485.7a4.7 4.7 0 1 0 9.4 0a4.7 4.7 0 1 0 -9.4 0zM1402.7 392.6a4.7 4.7 0 1 0 9.4 0a4.7 4.7 0 1 0 -9.4 0zM1403.2 445.9a4.7 4.7 0 1 0 9.4 0a4.7 4.7 0 1 0 -9.4 0zM1403.7 407.3a4.7 4.7 0 1 0 9.4 0a4.7 4.7 0 1 0 -9.4 0zM1404.2 449a4.7 4.7 0 1 0 9.4 0a4.7 4.7 0 1 0 -9.4 0zM1404.7 397.7a4.7 4.7 0 1 0 9.4 0a4.7 4.7 0 1 0 -9.4 0zM1405.2 447.3a4.7 4.7 0 1 0 9.4 0a4.7 4.7 0 1 0 -9.4 0zM1405.7 609.4a4.7 4.7 0 1 0 9.4 0a4.7 4.7 0 1 0 -9.4 0zM1406 551a4.7 4.7 0 1 0 9.4 0a4.7 4.7 0 1 0 -9.4 0zM1406.7 658.4a4.7 4.7 0 1 0 9.4 0a4.7 4.7 0 1 0 -9.4 0zM1407.2 415.5a4.7 4.7 0 1 0 9.4 0a4.7 4.7 0 1 0 -9.4 0zM1407.7 331.4a4.7 4.7 0 1 0 9.4 0a4.7 4.7 0 1 0 -9.4 0zM1408.3 508a4.7 4.7 0 1 0 9.4 0a4.7 4.7 0 1 0 -9.4 0zM1408.8 456.5a4.7 4.7 0 1 0 9.4 0a4.7 4.7 0 1 0 -9.4 0zM1409.3 354.6a4.7 4.7 0 1 0 9.4 0a4.7 4.7 0 1 0 -9.4 0zM1409.8 449.6a4.7 4.7 0 1 0 9.4 0a4.7 4.7 0 1 0 -9.4 0zM1410.3 379.2a4.7 4.7 0 1 0 9.4 0a4.7 4.7 0 1 0 -9.4 0zM1410.8 467a4.7 4.7 0 1 0 9.4 0a4.7 4.7 0 1 0 -9.4 0zM1411.3 349a4.7 4.7 0 1 0 9.4 0a4.7 4.7 0 1 0 -9.4 0zM1411.8 366.6a4.7 4.7 0 1 0 9.4 0a4.7 4.7 0 1 0 -9.4 0zM1412.3 438.6a4.7 4.7 0 1 0 9.4 0a4.7 4.7 0 1 0 -9.4 0zM1412.8 387.7a4.7 4.7 0 1 0 9.4 0a4.7 4.7 0 1 0 -9.4 0zM1413.3 468.1a4.7 4.7 0 1 0 9.4 0a4.7 4.7 0 1 0 -9.4 0zM1413.8 409.3a4.7 4.7 0 1 0 9.4 0a4.7 4.7 0 1 0 -9.4 0zM1414.3 571a4.7 4.7 0 1 0 9.4 0a4.7 4.7 0 1 0 -9.4 0zM1414.8 430.2a4.7 4.7 0 1 0 9.4 0a4.7 4.7 0 1 0 -9.4 0zM1415.3 381.8a4.7 4.7 0 1 0 9.4 0a4.7 4.7 0 1 0 -9.4 0zM1415.8 438.3a4.7 4.7 0 1 0 9.4 0a4.7 4.7 0 1 0 -9.4 0zM1416.3 340a4.7 4.7 0 1 0 9.4 0a4.7 4.7 0 1 0 -9.4 0zM1416.8 390.7a4.7 4.7 0 1 0 9.4 0a4.7 4.7 0 1 0 -9.4 0zM1417.3 450a4.7 4.7 0 1 0 9.4 0a4.7 4.7 0 1 0 -9.4 0zM1417.7 419.8a4.7 4.7 0 1 0 9.4 0a4.7 4.7 0 1 0 -9.4 0zM1418.2 471.4a4.7 4.7 0 1 0 9.4 0a4.7 4.7 0 1 0 -9.4 0zM1418.7 607.4a4.7 4.7 0 1 0 9.4 0a4.7 4.7 0 1 0 -9.4 0zM1419.1 370.5a4.7 4.7 0 1 0 9.4 0a4.7 4.7 0 1 0 -9.4 0zM1419.6 428.5a4.7 4.7 0 1 0 9.4 0a4.7 4.7 0 1 0 -9.4 0zM1420 405.8a4.7 4.7 0 1 0 9.4 0a4.7 4.7 0 1 0 -9.4 0zM1420.4 438.7a4.7 4.7 0 1 0 9.4 0a4.7 4.7 0 1 0 -9.4 0zM1420.9 390a4.7 4.7 0 1 0 9.4 0a4.7 4.7 0 1 0 -9.4 0zM1421.3 315.4a4.7 4.7 0 1 0 9.4 0a4.7 4.7 0 1 0 -9.4 0zM1421.8 451.9a4.7 4.7 0 1 0 9.4 0a4.7 4.7 0 1 0 -9.4 0zM1422.3 307.4a4.7 4.7 0 1 0 9.4 0a4.7 4.7 0 1 0 -9.4 0zM1422.8 375.7a4.7 4.7 0 1 0 9.4 0a4.7 4.7 0 1 0 -9.4 0zM1423.3 710.4a4.7 4.7 0 1 0 9.4 0a4.7 4.7 0 1 0 -9.4 0zM1423.6 496a4.7 4.7 0 1 0 9.4 0a4.7 4.7 0 1 0 -9.4 0zM1424 473.5a4.7 4.7 0 1 0 9.4 0a4.7 4.7 0 1 0 -9.4 0zM1424.3 407.5a4.7 4.7 0 1 0 9.4 0a4.7 4.7 0 1 0 -9.4 0zM1424.7 297.4a4.7 4.7 0 1 0 9.4 0a4.7 4.7 0 1 0 -9.4 0zM1425.1 477a4.7 4.7 0 1 0 9.4 0a4.7 4.7 0 1 0 -9.4 0zM1425.5 388.1a4.7 4.7 0 1 0 9.4 0a4.7 4.7 0 1 0 -9.4 0zM1425.9 482.7a4.7 4.7 0 1 0 9.4 0a4.7 4.7 0 1 0 -9.4 0zM1426.3 390.6a4.7 4.7 0 1 0 9.4 0a4.7 4.7 0 1 0 -9.4 0zM1426.7 480.9a4.7 4.7 0 1 0 9.4 0a4.7 4.7 0 1 0 -9.4 0zM1427.1 396.8a4.7 4.7 0 1 0 9.4 0a4.7 4.7 0 1 0 -9.4 0zM1427.5 464.3a4.7 4.7 0 1 0 9.4 0a4.7 4.7 0 1 0 -9.4 0zM1427.9 367.8a4.7 4.7 0 1 0 9.4 0a4.7 4.7 0 1 0 -9.4 0zM1428.3 513a4.7 4.7 0 1 0 9.4 0a4.7 4.7 0 1 0 -9.4 0zM1428.8 487.6a4.7 4.7 0 1 0 9.4 0a4.7 4.7 0 1 0 -9.4 0zM1429.2 406.7a4.7 4.7 0 1 0 9.4 0a4.7 4.7 0 1 0 -9.4 0zM1429.7 293.6a4.7 4.7 0 1 0 9.4 0a4.7 4.7 0 1 0 -9.4 0zM1430.3 532a4.7 4.7 0 1 0 9.4 0a4.7 4.7 0 1 0 -9.4 0zM1430.7 473a4.7 4.7 0 1 0 9.4 0a4.7 4.7 0 1 0 -9.4 0zM1431.1 386.8a4.7 4.7 0 1 0 9.4 0a4.7 4.7 0 1 0 -9.4 0zM1431.5 440.6a4.7 4.7 0 1 0 9.4 0a4.7 4.7 0 1 0 -9.4 0zM1431.9 368.1a4.7 4.7 0 1 0 9.4 0a4.7 4.7 0 1 0 -9.4 0zM1432.3 459.8a4.7 4.7 0 1 0 9.4 0a4.7 4.7 0 1 0 -9.4 0zM1432.7 395.9a4.7 4.7 0 1 0 9.4 0a4.7 4.7 0 1 0 -9.4 0zM1433.1 466.6a4.7 4.7 0 1 0 9.4 0a4.7 4.7 0 1 0 -9.4 0zM1433.5 383.3a4.7 4.7 0 1 0 9.4 0a4.7 4.7 0 1 0 -9.4 0zM1433.9 445.4a4.7 4.7 0 1 0 9.4 0a4.7 4.7 0 1 0 -9.4 0zM1434.3 375.8a4.7 4.7 0 1 0 9.4 0a4.7 4.7 0 1 0 -9.4 0zM1434.7 482.4a4.7 4.7 0 1 0 9.4 0a4.7 4.7 0 1 0 -9.4 0zM1435.1 388.3a4.7 4.7 0 1 0 9.4 0a4.7 4.7 0 1 0 -9.4 0zM1435.5 453.5a4.7 4.7 0 1 0 9.4 0a4.7 4.7 0 1 0 -9.4 0zM1435.9 375.3a4.7 4.7 0 1 0 9.4 0a4.7 4.7 0 1 0 -9.4 0zM1436.3 582.4a4.7 4.7 0 1 0 9.4 0a4.7 4.7 0 1 0 -9.4 0zM1436.7 477.1a4.7 4.7 0 1 0 9.4 0a4.7 4.7 0 1 0 -9.4 0zM1437 415a4.7 4.7 0 1 0 9.4 0a4.7 4.7 0 1 0 -9.4 0zM1437.4 464.3a4.7 4.7 0 1 0 9.4 0a4.7 4.7 0 1 0 -9.4 0zM1437.8 364.8a4.7 4.7 0 1 0 9.4 0a4.7 4.7 0 1 0 -9.4 0zM1438.1 479a4.7 4.7 0 1 0 9.4 0a4.7 4.7 0 1 0 -9.4 0zM1438.5 405.4a4.7 4.7 0 1 0 9.4 0a4.7 4.7 0 1 0 -9.4 0zM1438.8 451.4a4.7 4.7 0 1 0 9.4 0a4.7 4.7 0 1 0 -9.4 0zM1439.2 380.4a4.7 4.7 0 1 0 9.4 0a4.7 4.7 0 1 0 -9.4 0zM1439.6 442.4a4.7 4.7 0 1 0 9.4 0a4.7 4.7 0 1 0 -9.4 0zM1439.9 394.4a4.7 4.7 0 1 0 9.4 0a4.7 4.7 0 1 0 -9.4 0zM1440.3 588a4.7 4.7 0 1 0 9.4 0a4.7 4.7 0 1 0 -9.4 0zM1440.6 450a4.7 4.7 0 1 0 9.4 0a4.7 4.7 0 1 0 -9.4 0zM1440.9 219.4a4.7 4.7 0 1 0 9.4 0a4.7 4.7 0 1 0 -9.4 0zM1441.2 419.3a4.7 4.7 0 1 0 9.4 0a4.7 4.7 0 1 0 -9.4 0zM1441.6 436.2a4.7 4.7 0 1 0 9.4 0a4.7 4.7 0 1 0 -9.4 0zM1442 403.6a4.7 4.7 0 1 0 9.4 0a4.7 4.7 0 1 0 -9.4 0zM1442.3 470.4a4.7 4.7 0 1 0 9.4 0a4.7 4.7 0 1 0 -9.4 0zM1442.6 379.5a4.7 4.7 0 1 0 9.4 0a4.7 4.7 0 1 0 -9.4 0zM1443 436.7a4.7 4.7 0 1 0 9.4 0a4.7 4.7 0 1 0 -9.4 0zM1443.4 380.1a4.7 4.7 0 1 0 9.4 0a4.7 4.7 0 1 0 -9.4 0zM1443.7 323a4.7 4.7 0 1 0 9.4 0a4.7 4.7 0 1 0 -9.4 0zM1444 610a4.7 4.7 0 1 0 9.4 0a4.7 4.7 0 1 0 -9.4 0zM1444.3 477.7a4.7 4.7 0 1 0 9.4 0a4.7 4.7 0 1 0 -9.4 0zM1444.7 363.4a4.7 4.7 0 1 0 9.4 0a4.7 4.7 0 1 0 -9.4 0zM1445 465.6a4.7 4.7 0 1 0 9.4 0a4.7 4.7 0 1 0 -9.4 0zM1445.4 395.2a4.7 4.7 0 1 0 9.4 0a4.7 4.7 0 1 0 -9.4 0zM1445.7 342.4a4.7 4.7 0 1 0 9.4 0a4.7 4.7 0 1 0 -9.4 0zM1446.1 477.6a4.7 4.7 0 1 0 9.4 0a4.7 4.7 0 1 0 -9.4 0zM1446.4 405.6a4.7 4.7 0 1 0 9.4 0a4.7 4.7 0 1 0 -9.4 0zM1446.8 457.1a4.7 4.7 0 1 0 9.4 0a4.7 4.7 0 1 0 -9.4 0zM1447.2 354.6a4.7 4.7 0 1 0 9.4 0a4.7 4.7 0 1 0 -9.4 0zM1447.6 472a4.7 4.7 0 1 0 9.4 0a4.7 4.7 0 1 0 -9.4 0zM1447.9 370a4.7 4.7 0 1 0 9.4 0a4.7 4.7 0 1 0 -9.4 0zM1448.3 582.4a4.7 4.7 0 1 0 9.4 0a4.7 4.7 0 1 0 -9.4 0zM1448.7 470.7a4.7 4.7 0 1 0 9.4 0a4.7 4.7 0 1 0 -9.4 0zM1449 395.4a4.7 4.7 0 1 0 9.4 0a4.7 4.7 0 1 0 -9.4 0zM1449.4 456a4.7 4.7 0 1 0 9.4 0a4.7 4.7 0 1 0 -9.4 0zM1449.7 414.8a4.7 4.7 0 1 0 9.4 0a4.7 4.7 0 1 0 -9.4 0zM1450.1 470a4.7 4.7 0 1 0 9.4 0a4.7 4.7 0 1 0 -9.4 0zM1450.4 551a4.7 4.7 0 1 0 9.4 0a4.7 4.7 0 1 0 -9.4 0zM1450.7 358a4.7 4.7 0 1 0 9.4 0a4.7 4.7 0 1 0 -9.4 0zM1451 484a4.7 4.7 0 1 0 9.4 0a4.7 4.7 0 1 0 -9.4 0zM1451.3 521a4.7 4.7 0 1 0 9.4 0a4.7 4.7 0 1 0 -9.4 0zM1451.6 551a4.7 4.7 0 1 0 9.4 0a4.7 4.7 0 1 0 -9.4 0zM1451.9 452a4.7 4.7 0 1 0 9.4 0a4.7 4.7 0 1 0 -9.4 0zM1452.2 384a4.7 4.7 0 1 0 9.4 0a4.7 4.7 0 1 0 -9.4 0zM1452.5 362a4.7 4.7 0 1 0 9.4 0a4.7 4.7 0 1 0 -9.4 0zM1452.8 484a4.7 4.7 0 1 0 9.4 0a4.7 4.7 0 1 0 -9.4 0zM1453.1 402a4.7 4.7 0 1 0 9.4 0a4.7 4.7 0 1 0 -9.4 0zM1453.4 440a4.7 4.7 0 1 0 9.4 0a4.7 4.7 0 1 0 -9.4 0zM1453.7 368a4.7 4.7 0 1 0 9.4 0a4.7 4.7 0 1 0 -9.4 0zM1454 462a4.7 4.7 0 1 0 9.4 0a4.7 4.7 0 1 0 -9.4 0zM1454.3 418a4.7 4.7 0 1 0 9.4 0a4.7 4.7 0 1 0 -9.4 0zM1454.6 374a4.7 4.7 0 1 0 9.4 0a4.7 4.7 0 1 0 -9.4 0zM1454.9 395a4.7 4.7 0 1 0 9.4 0a4.7 4.7 0 1 0 -9.4 0zM1455.2 433a4.7 4.7 0 1 0 9.4 0a4.7 4.7 0 1 0 -9.4 0z" stroke="none"/>
</g>
<rect x="740.5" y="194.5" width="752" height="540" fill="none" stroke="#000" stroke-width="1.25"/>
<path d="M880.3 734.8v4.9M1163.8 734.8v4.9M1447.4 734.8v4.9" stroke="#000" stroke-width="1.1" fill="none"/>
<path d="M767.5 734.8v2.8M794.9 734.8v2.8M817.4 734.8v2.8M836.4 734.8v2.8M852.8 734.8v2.8M867.3 734.8v2.8M965.7 734.8v2.8M1015.6 734.8v2.8M1051 734.8v2.8M1078.5 734.8v2.8M1100.9 734.8v2.8M1119.9 734.8v2.8M1136.4 734.8v2.8M1150.9 734.8v2.8M1249.2 734.8v2.8M1299.1 734.8v2.8M1334.6 734.8v2.8M1362 734.8v2.8M1384.5 734.8v2.8M1403.5 734.8v2.8M1419.9 734.8v2.8M1434.4 734.8v2.8M740.25 236.7h-2.8M740.25 270.6h-2.8M740.25 309h-2.8M740.25 353.4h-2.8M740.25 405.8h-2.8M740.25 470h-2.8M740.25 552.8h-2.8M740.25 669.4h-2.8" stroke="#000" stroke-width="0.85" fill="none"/>
<path d="M740.25 206.4h-4.9" stroke="#000" stroke-width="1.1" fill="none"/>
<g fill="#000">
<text x="729.4" y="212.5" text-anchor="end" font-size="13.89">10<tspan font-size="9.72" dy="-5.3">3</tspan></text>
<text x="731.8" y="359.5" text-anchor="end" font-size="13.89">6<tspan dx="3.2">×</tspan><tspan dx="1.7">10</tspan><tspan font-size="9.72" dy="-5.3">2</tspan></text>
<text x="731.8" y="476.1" text-anchor="end" font-size="13.89">4<tspan dx="3.2">×</tspan><tspan dx="1.7">10</tspan><tspan font-size="9.72" dy="-5.3">2</tspan></text>
<text x="731.8" y="558.9" text-anchor="end" font-size="13.89">3<tspan dx="3.2">×</tspan><tspan dx="1.7">10</tspan><tspan font-size="9.72" dy="-5.3">2</tspan></text>
<text x="731.8" y="675.5" text-anchor="end" font-size="13.89">2<tspan dx="3.2">×</tspan><tspan dx="1.7">10</tspan><tspan font-size="9.72" dy="-5.3">2</tspan></text>
<text x="880.3" y="759.2" text-anchor="middle" font-size="13.89">10<tspan font-size="9.72" dy="-5.3">−6</tspan></text>
<text x="1163.8" y="759.2" text-anchor="middle" font-size="13.89">10<tspan font-size="9.72" dy="-5.3">−5</tspan></text>
<text x="1447.4" y="759.2" text-anchor="middle" font-size="13.89">10<tspan font-size="9.72" dy="-5.3">−4</tspan></text>
<text x="1117" y="185.6" text-anchor="middle" font-size="16.67">Transient luminescent decay rate</text>
<text x="1116.4" y="780.2" text-anchor="middle" font-size="13.89">Time [s]</text>
<text transform="translate(668,464.5) rotate(-90)" text-anchor="middle" font-size="13.89">Radiative decay rate [s<tspan font-size="9.72" dy="-5.3">−1</tspan><tspan dy="5.3"> nm</tspan><tspan font-size="9.72" dy="-5.3">−3</tspan><tspan dy="5.3">]</tspan></text>
</g>
<g fill="#dd5535"><rect x="1588" y="195" width="1.2" height="10"/><rect x="1588" y="221" width="1.2" height="12"/><rect x="1588" y="243" width="1.2" height="8" opacity=".8"/><rect x="1588" y="252" width="1.2" height="25" opacity=".25"/><rect x="1588" y="277" width="1.2" height="186"/><rect x="1588" y="502" width="1.2" height="6"/></g>
<rect x="1588" y="165" width="1" height="1" fill="#000"/><rect x="1588" y="706" width="1" height="1" fill="#000"/>
</svg>
<div class="abs tbl">
<div class="abs hdr" style="left:0;width:29px"></div>
<div class="abs hdr" style="left:29px;width:189px">Time[s]</div>
<div class="abs hdr" style="left:218px;width:189px"><span class="abs" style="left:-46.2px;top:0;letter-spacing:0.3px">Recombination_Rate_per_Site_[s-1]</span></div>
<div class="abs hdr" style="left:407px;width:188px">CI(70%)</div>
<div class="abs hdr" style="left:595px;width:188px">stdOfMeans</div>
<div class="abs hdr" style="left:783px;width:188px">stdPool</div>
<div class="abs rowh" style="top:21px">1</div>
<div class="abs cell" style="left:29px;top:21px;width:189px">4.24295e-07</div>
<div class="abs cell" style="left:218px;top:21px;width:189px">455.175</div>
<div class="abs cell" style="left:407px;top:21px;width:188px">0</div>
<div class="abs cell" style="left:595px;top:21px;width:188px">0</div>
<div class="abs cell" style="left:783px;top:21px;width:188px">164.228</div>
<div class="abs rowh" style="top:51px">2</div>
<div class="abs cell" style="left:29px;top:51px;width:189px">1.00569e-06</div>
<div class="abs cell" style="left:218px;top:51px;width:189px">477.514</div>
<div class="abs cell" style="left:407px;top:51px;width:188px">0</div>
<div class="abs cell" style="left:595px;top:51px;width:188px">0</div>
<div class="abs cell" style="left:783px;top:51px;width:188px">356.311</div>
<div class="abs rowh" style="top:81px">3</div>
<div class="abs cell" style="left:29px;top:81px;width:189px">1.55246e-06</div>
<div class="abs cell" style="left:218px;top:81px;width:189px">594.652</div>
<div class="abs cell" style="left:407px;top:81px;width:188px">0</div>
<div class="abs cell" style="left:595px;top:81px;width:188px">0</div>
<div class="abs cell" style="left:783px;top:81px;width:188px">103.645</div>
<div class="abs rowh" style="top:111px">4</div>
<div class="abs cell" style="left:29px;top:111px;width:189px">2.1029e-06</div>
<div class="abs cell" style="left:218px;top:111px;width:189px">633.154</div>
<div class="abs cell" style="left:407px;top:111px;width:188px">0</div>
<div class="abs cell" style="left:595px;top:111px;width:188px">0</div>
<div class="abs cell" style="left:783px;top:111px;width:188px">234.877</div>
<div class="abs rowh" style="top:141px">5</div>
<div class="abs cell" style="left:29px;top:141px;width:189px">2.65411e-06</div>
<div class="abs cell" style="left:218px;top:141px;width:189px">394.403</div>
<div class="abs cell" style="left:407px;top:141px;width:188px">0</div>
<div class="abs cell" style="left:595px;top:141px;width:188px">0</div>
<div class="abs cell" style="left:783px;top:141px;width:188px">191.293</div>
</div>
<div class="abs sb"><div class="abs sbb" style="top:0"><svg width="14" height="13" viewBox="0 0 14 13"><path d="M2.2 8L6.1 4.1L10 8Z" fill="#4a4a4a"/></svg></div><div class="abs" style="left:0;top:14px;width:13px;height:26px;background:linear-gradient(90deg,#fcfcfc,#eeeeee);border-bottom:1px solid #bdbdbd"></div><div class="abs sbb" style="top:138px;border-bottom:none;border-top:1px solid #b9b9b9"><svg width="14" height="13" viewBox="0 0 14 13"><path d="M2.2 3.6L6.1 7.5L10 3.6Z" fill="#4a4a4a"/></svg></div></div>
<svg class="abs" style="left:0;top:0;pointer-events:none" width="1600" height="1000" viewBox="0 0 1600 1000"><g fill="#a8a8a8"><rect x="1597" y="988" width="1" height="1"/><rect x="1594" y="991" width="1" height="1"/><rect x="1597" y="991" width="1" height="1"/><rect x="1591" y="994" width="1" height="1"/><rect x="1594" y="994" width="1" height="1"/><rect x="1597" y="994" width="1" height="1"/><rect x="1588" y="997" width="1" height="1"/><rect x="1591" y="997" width="1" height="1"/><rect x="1594" y="997" width="1" height="1"/><rect x="1597" y="997" width="1" height="1"/></g></svg>
</body></html>
